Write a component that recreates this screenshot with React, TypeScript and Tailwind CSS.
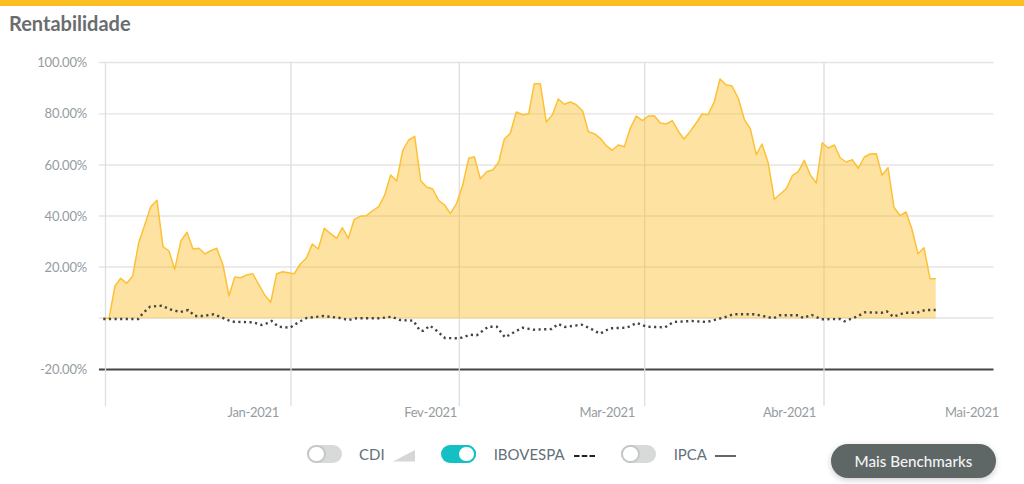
const area = "103.3,318.3 109,318.3 115,286 120.7,278.3 126.7,283.3 132.7,276 138.7,242.7 144.7,225 150.7,206.7 157,200.3 163,246.7 169,251 174.7,269.3 181,240.7 187,232.3 193,249 199,248.3 205,254 210.7,250.7 216.7,248.3 223,265 229,296 234.7,277 240.7,277.7 246.7,275 252.7,273.7 258.7,284.3 264.7,295 270.7,302.3 276.7,273.7 282.7,271.7 288.3,272.7 294.3,273.7 300.3,264 306.3,258.3 312.3,244 318.3,249 324.3,228.3 330.3,233.3 336.7,238.3 342.3,227.7 348.3,238.3 354.3,219.3 360.3,216.3 366.3,215.7 372.3,211 378.7,206.7 384.7,195 390.7,175 396.7,181 402.7,150.7 408.7,140 414.7,136.3 420.7,180.7 426.7,187 432.7,189 438.7,200.7 444.7,205 450.3,213.7 456.7,203.3 462.7,185 468.7,158.3 474.3,156.7 480.3,178.7 486.7,171.7 492.7,170 498.7,162.3 504.3,139.3 510.3,133.3 516.3,112 522.7,114.7 528.7,113.7 534.3,83.7 540.3,83.7 546.3,122 552.3,115 558.3,99 564.3,104.3 570.3,102 576.3,104.7 582.7,111 588.3,131.7 594.3,133.7 600.3,138.3 606.3,145.7 612.3,150.3 618.3,145 624.3,146.7 630.3,128.3 636.3,116 642.3,120.7 648.3,116 654.3,115.7 660.3,123 666.3,124 672.3,120.7 679.7,133.3 684,139 690,131.7 696,123.3 702,114 708,114.7 714,102.7 720,79 726,84.7 732,86 738.3,98.3 744.3,119.3 750.3,128.7 756.3,154.7 762,144 768.3,163.3 774.3,199.3 780.3,194 786.3,188.7 792.3,175.7 798.3,171.7 804.3,160.3 810.3,175 816.3,183 822.3,142.7 828.3,148 834.3,145 840.3,158 846.3,162 852.3,159.7 858.3,168.3 864.3,157 870.3,154 876.3,153.7 882,175.3 888,167.7 894,207.3 900,215.7 906,212 912,229.3 918,253.7 924,247.7 930,278.7 935.7,278.7";

const ibov = "103.3,319 138.3,319 143.3,312.7 150,306.7 161.7,305.7 170,309.3 180,312 188.3,310 195,316 203.3,316 213.3,314.3 220,316.7 231.7,321.7 253.3,322.3 261.7,325 266.7,323.3 271.7,321 278.3,326.7 290,327.7 298.3,322.3 306.7,318 323.3,316 340,318 348.3,320 356.7,318.3 380,318.3 391.7,316.7 400,320 413.3,320.7 420,330.7 423.3,330.7 430,325.7 436.7,330.7 445,338 460,338.3 470,334.7 476.7,335.3 488.3,326.7 496.7,326.7 505,337.3 515,331.7 522.3,327.7 533.3,329.7 551.7,329 558.3,324 565,327 581.7,324.7 590,328.3 600,333.7 610,328.3 626.7,327.7 636.7,323 646.7,326.7 665,327.3 673.3,322 691.7,321 706.7,322 723.3,317.7 733.3,314.3 755,314.3 773.3,318.3 780,315.3 798.3,315.3 803.3,318 811.7,315 821.7,319.3 840,319 844.3,321.3 856.7,316.7 865,312.3 881.7,312.7 886.7,311.3 893.3,316.7 905,312.7 916.7,312.7 925,310 935.7,310";

const yTicks: [number, string][] = [
  [62.5, "100.00%"],
  [113.8, "80.00%"],
  [165, "60.00%"],
  [216, "40.00%"],
  [267, "20.00%"],
  [369.5, "-20.00%"],
];
const vLines = [105.5, 291, 459.3, 644.7, 824];
const xLabels: [number, string][] = [
  [279, "Jan-2021"],
  [457, "Fev-2021"],
  [635, "Mar-2021"],
  [816, "Abr-2021"],
  [999, "Mai-2021"],
];

function Toggle({ on }: { on?: boolean }) {
  return (
    <span
      className={`flex h-[18px] w-[35px] shrink-0 items-center rounded-full ${
        on ? "justify-end bg-[#14c0c4]" : "justify-start bg-[#d8dada]"
      }`}
    >
      <span
        className={`h-[18px] w-[19px] rounded-full border-2 bg-white ${on ? "border-[#14c0c4]" : "border-[#c4c7c7]"}`}
      />
    </span>
  );
}

export default function App() {
  return (
    <div className="relative h-[484px] w-[1024px] overflow-hidden bg-white font-['Lato','Open_Sans',sans-serif]">
      <div className="h-[6px] bg-[#fdbe21]" />
      <h1 className="pl-[9px] pt-[5px] text-[20px] font-bold leading-[25px] text-[#6a6d70]">Rentabilidade</h1>
      <svg width="1024" height="394" viewBox="0 36 1024 394" className="block">
        {yTicks.map(([y, t]) => (
          <g key={t}>
            <line
              x1="99"
              x2="993.5"
              y1={y}
              y2={y}
              stroke={y === 369.5 ? "#444444" : "#e4e4e4"}
              strokeWidth={y === 369.5 ? 2 : 1.3}
            />
            <text x="87" y={y + 4.5} textAnchor="end" fontSize="13" letterSpacing="-0.2" fill="#959ca1">
              {t}
            </text>
          </g>
        ))}
        <line x1="99" x2="993.5" y1="318" y2="318" stroke="#e4e4e4" strokeWidth="1.3" />
        {vLines.map((x) => (
          <line key={x} x1={x} x2={x} y1="62" y2="406" stroke="#dedede" strokeWidth="1.3" />
        ))}
        <polygon points={`${area} 935.7,318.5 103.3,318.5`} fill="#fcbb21" fillOpacity="0.42" />
        <polyline points={area} fill="none" stroke="#fdc136" strokeWidth="1.5" strokeLinejoin="round" />
        <polyline points={ibov} fill="none" stroke="#444444" strokeWidth="2.4" strokeDasharray="2.2 3.4" />
        {xLabels.map(([x, t]) => (
          <text key={t} x={x} y="417" textAnchor="end" fontSize="13" letterSpacing="-0.3" fill="#959ca1">
            {t}
          </text>
        ))}
      </svg>
      <div className="flex items-center pl-[307px] pt-[14px] text-[15px] leading-[20px] text-[#647079]">
        <Toggle />
        <span className="ml-[17px]">CDI</span>
        <svg width="22" height="12" viewBox="0 0 22 12" className="ml-[8px] mt-[4px]">
          <polygon points="0,11.5 22,0 22,11.5" fill="#d6d6d6" />
        </svg>
        <span className="ml-[26px]">
          <Toggle on />
        </span>
        <span className="ml-[18px]">IBOVESPA</span>
        <svg width="21" height="4" viewBox="0 0 21 4" className="ml-[9px] mt-[4px]">
          <line x1="0" x2="21" y1="2" y2="2" stroke="#222" strokeWidth="2" strokeDasharray="5.5 2.25" />
        </svg>
        <span className="ml-[26px]">
          <Toggle />
        </span>
        <span className="ml-[18px]">IPCA</span>
        <svg width="21" height="4" viewBox="0 0 21 4" className="ml-[8px] mt-[4px]">
          <line x1="0" x2="21" y1="2" y2="2" stroke="#666" strokeWidth="2" />
        </svg>
      </div>
      <button className="absolute left-[831px] top-[444px] h-[34px] w-[165px] rounded-full bg-[#5f6666] text-[15.2px] font-medium text-[#f2f4f4] shadow-[0_2px_6px_rgba(0,0,0,0.2)]">
        Mais Benchmarks
      </button>
    </div>
  );
}
